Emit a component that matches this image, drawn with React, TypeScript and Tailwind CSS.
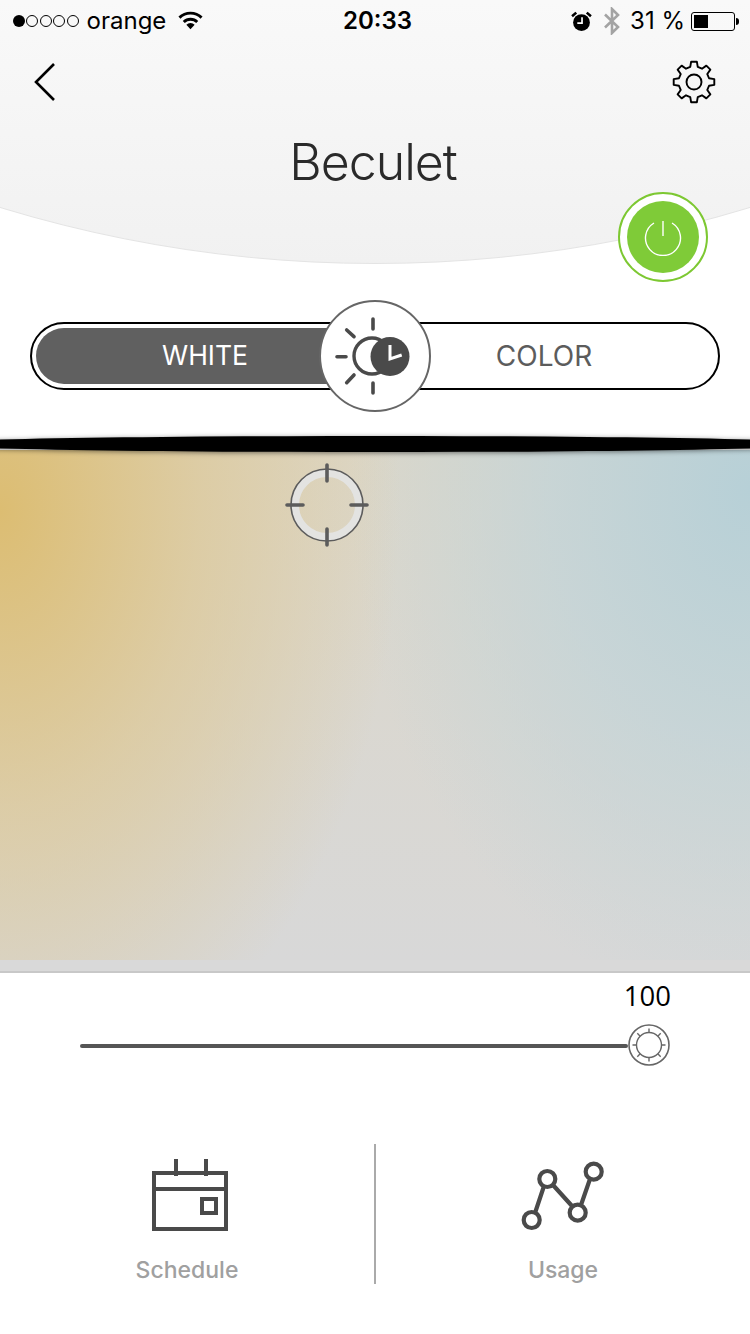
const FONT = "font-['Inter','Liberation_Sans',sans-serif]";

function gearPath(cx: number, cy: number, outer: number, root: number) {
  const pt = (deg: number, r: number) => {
    const a = (deg * Math.PI) / 180;
    return `${(cx + r * Math.cos(a)).toFixed(2)} ${(cy + r * Math.sin(a)).toFixed(2)}`;
  };
  let d = "";
  for (let k = 0; k < 8; k++) {
    const a = k * 45 - 90;
    d += `${k === 0 ? "M" : "L"}${pt(a - 14, root)} L${pt(a - 8, outer)} L${pt(a + 8, outer)} L${pt(a + 14, root)} `;
  }
  return d + "Z";
}

function Gear() {
  return (
    <svg width="44" height="44" viewBox="0 0 44 44" fill="none" stroke="black" strokeWidth="1.9" strokeLinejoin="round">
      <path d={gearPath(22, 22, 20.5, 15.5)} />
      <circle cx="22" cy="22" r="7.5" />
    </svg>
  );
}

function Wifi() {
  return (
    <svg width="25" height="20" viewBox="0 0 26 20" className="text-black">
      <path d="M1.5 6.5 A16.5 16.5 0 0 1 24.5 6.5" fill="none" stroke="currentColor" strokeWidth="3" />
      <path d="M6 11 A10 10 0 0 1 20 11" fill="none" stroke="currentColor" strokeWidth="3" />
      <path d="M8.7 14 A6 6 0 0 1 17.3 14 L13 18.5 Z" fill="currentColor" />
    </svg>
  );
}

function Alarm() {
  return (
    <svg width="21" height="21" viewBox="0 0 20 20">
      <circle cx="10" cy="11" r="8" fill="black" />
      <path d="M1 5 L5 1.5 M19 5 L15 1.5" stroke="black" strokeWidth="2.4" />
      <path d="M10.5 6 V11.5 H6" fill="none" stroke="white" strokeWidth="1.6" />
    </svg>
  );
}

function Bluetooth() {
  return (
    <svg width="20" height="28" viewBox="0 0 20 28">
      <path d="M3 7.5 L16 20 L10 26 V2 L16 8 L3 20.5" fill="none" stroke="#a3a3a3" strokeWidth="2.6" />
    </svg>
  );
}

function Battery() {
  return (
    <div className="flex items-center gap-[1px]">
      <div className="h-[19px] w-[44px] rounded-[3px] border border-black p-[2px]">
        <div className="h-full w-[14px] bg-black" />
      </div>
      <div className="h-[7px] w-[3px] rounded-r-full bg-black" />
    </div>
  );
}

function StatusBar() {
  return (
    <div className={`relative flex h-[42px] items-center justify-between pl-[13px] pr-[11px] text-[24px] text-black ${FONT}`}>
      <div className="flex items-center">
        <div className="flex items-center gap-[1.4px]">
          <span className="size-[12px] rounded-full bg-black" />
          <span className="size-[12px] rounded-full border border-black" />
          <span className="size-[12px] rounded-full border border-black" />
          <span className="size-[12px] rounded-full border border-black" />
          <span className="size-[12px] rounded-full border border-black" />
        </div>
        <span className="ml-[8px]">orange</span>
        <span className="ml-[12px]">
          <Wifi />
        </span>
      </div>
      <span className="absolute left-[343px] font-semibold">20:33</span>
      <div className="flex items-center">
        <Alarm />
        <span className="ml-[10px]">
          <Bluetooth />
        </span>
        <span className="ml-[8px]">31 %</span>
        <span className="ml-[6px]">
          <Battery />
        </span>
      </div>
    </div>
  );
}

function PowerButton() {
  return (
    <div className="absolute left-[618px] top-[192px] flex size-[90px] items-center justify-center rounded-full border-2 border-[#7dc832] bg-white">
      <div className="flex size-[72px] items-center justify-center rounded-full bg-[#7fcb38]">
        <svg width="38" height="38" viewBox="0 0 38 38" fill="none" stroke="white" strokeWidth="1.4">
          <path d="M10 5 A17.5 17.5 0 1 0 28 5" />
          <path d="M19 3 V18" />
        </svg>
      </div>
    </div>
  );
}

function Header() {
  return (
    <header className="relative h-[264px]">
      <div className="absolute -left-[908px] -top-[2302px] size-[2566px] rounded-full border border-[#e4e4e4] bg-[linear-gradient(to_bottom,#f9f9f9_2302px,#f1f1f1_2566px)]" />
      <div className="relative">
        <StatusBar />
        <div className="flex items-start justify-between pl-[30px] pr-[34px] pt-[18px]">
          <svg width="28" height="44" viewBox="0 0 28 44" fill="none" stroke="black" strokeWidth="2.6">
            <path d="M24 4 L6 22 L24 40" />
          </svg>
          <Gear />
        </div>
        <h1 className={`mt-[28px] pr-[4px] text-center text-[50px] font-light leading-[60px] tracking-[-1px] text-[#2a2a2a] ${FONT}`}>
          Beculet
        </h1>
      </div>
      <PowerButton />
    </header>
  );
}

function ModeKnob() {
  return (
    <div className="absolute left-[287px] top-[-24px] flex size-[112px] items-center justify-center rounded-full border-2 border-[#666] bg-white">
      <svg width="80" height="80" viewBox="0 0 80 80" fill="none">
        <path
          d="M38 3 V13 M38 67 V77 M2 40.7 H11 M11.7 14 L19 20.7 M11.7 66.7 L19 59"
          stroke="#4a4a4a"
          strokeWidth="3.6"
          strokeLinecap="round"
        />
        <circle cx="37" cy="40" r="18" stroke="#4a4a4a" strokeWidth="3.4" />
        <circle cx="55" cy="40.5" r="19.5" fill="#4a4a4a" />
        <path d="M55 29 V43 L66.7 39" stroke="white" strokeWidth="3" />
      </svg>
    </div>
  );
}

function ModeToggle() {
  return (
    <div className="px-[30px] pt-[58px]">
      <div className={`relative flex h-[68px] rounded-full border-2 border-black bg-white p-[4px] text-[26.5px] ${FONT}`}>
        <div className="flex w-[338px] items-center justify-center rounded-l-full bg-[#606060] text-white">WHITE</div>
        <div className="flex flex-1 items-center justify-center text-[28px] text-[#5c5c5c]">COLOR</div>
        <ModeKnob />
      </div>
    </div>
  );
}

function Crosshair() {
  return (
    <div className="absolute left-[285px] top-[13px] size-[84px]">
      <svg width="84" height="84" viewBox="0 0 84 84" fill="none">
        <circle cx="42" cy="42" r="32" stroke="#e3e3e1" strokeWidth="8" />
        <circle cx="42" cy="42" r="36" stroke="#5c5c5c" strokeWidth="1.6" />
        <path d="M42 2 V18 M42 66 V82 M2 42 H18 M66 42 H82" stroke="#5c5c5c" strokeWidth="3.6" strokeLinecap="round" />
      </svg>
    </div>
  );
}

function ColorField() {
  return (
    <section className="relative mt-[47px] pt-[13px]">
      <div className="absolute -left-[77px] -top-[1px] z-10 h-[16px] w-[904px] rounded-[50%] bg-black shadow-[0_1px_5px_rgba(0,0,0,0.5)]" />
      <div className="relative h-[510px] bg-[radial-gradient(ellipse_400px_600px_at_0px_60px,#dcbd72_0%,rgba(221,200,150,0.72)_50%,rgba(220,210,180,0)_100%),radial-gradient(ellipse_400px_520px_at_750px_40px,#b7d0d7_0%,rgba(194,212,217,0.75)_50%,rgba(205,215,218,0)_100%),linear-gradient(to_bottom,#dcd7c9,#d8d8d8)]">
        <Crosshair />
      </div>
      <div className="h-[13px] border-b-2 border-[#c8c8c8] bg-[#d9d9d9]" />
    </section>
  );
}

function SliderThumb() {
  return (
    <svg width="42" height="42" viewBox="0 0 42 42" fill="none" stroke="#666">
      <circle cx="21" cy="21" r="20" fill="white" strokeWidth="1.6" />
      <circle cx="21" cy="21" r="12.5" strokeWidth="1.4" />
      <path
        d="M21 4.5 V8.5 M21 33.5 V37.5 M4.5 21 H8.5 M33.5 21 H37.5 M9.3 9.3 L12.2 12.2 M32.7 9.3 L29.8 12.2 M9.3 32.7 L12.2 29.8 M32.7 32.7 L29.8 29.8"
        strokeWidth="1.4"
      />
    </svg>
  );
}

function Slider() {
  return (
    <section className="h-[171px] pl-[80px] pr-[80px]">
      <div className="-mr-[1px] text-right font-['Open_Sans',sans-serif] text-[27.5px] leading-[46px] text-black">100</div>
      <div className="mt-[5px] flex items-center">
        <div className="mt-[2px] h-[4px] flex-1 rounded-full bg-[#555]" />
        <SliderThumb />
      </div>
    </section>
  );
}

function ScheduleIcon() {
  return (
    <svg width="76" height="72" viewBox="0 0 76 72" fill="none" stroke="#4a4a4a" strokeWidth="4" className="ml-[6px] shrink-0">
      <rect x="2" y="14" width="72" height="56" />
      <path d="M2 30 H74 M24 0 V17 M54 0 V17" />
      <rect x="50" y="40" width="14" height="14" />
    </svg>
  );
}

function UsageIcon() {
  return (
    <svg width="84" height="72" viewBox="0 0 84 72" fill="none" stroke="#4a4a4a" strokeWidth="4.2" className="shrink-0">
      <path d="M14 53 L23 26 M32 25 L51 46 M60 45 L69 19" />
      <circle cx="10.7" cy="60" r="8" />
      <circle cx="26.3" cy="19" r="8" />
      <circle cx="56.7" cy="52.7" r="8" />
      <circle cx="72.7" cy="11.7" r="8" />
    </svg>
  );
}

function BottomNav() {
  return (
    <nav className={`flex h-[140px] text-[23px] font-medium text-[#a0a0a0] ${FONT}`}>
      <div className="flex w-[374px] flex-col items-center pt-[15px]">
        <ScheduleIcon />
        <span className="mt-[22px]">Schedule</span>
      </div>
      <div className="w-[2px] bg-[#aaa]" />
      <div className="flex flex-1 flex-col items-center pt-[16px]">
        <UsageIcon />
        <span className="mt-[21px]">Usage</span>
      </div>
    </nav>
  );
}

export default function App() {
  return (
    <div className="h-[1334px] w-[750px] overflow-hidden bg-white">
      <Header />
      <ModeToggle />
      <ColorField />
      <Slider />
      <BottomNav />
    </div>
  );
}
